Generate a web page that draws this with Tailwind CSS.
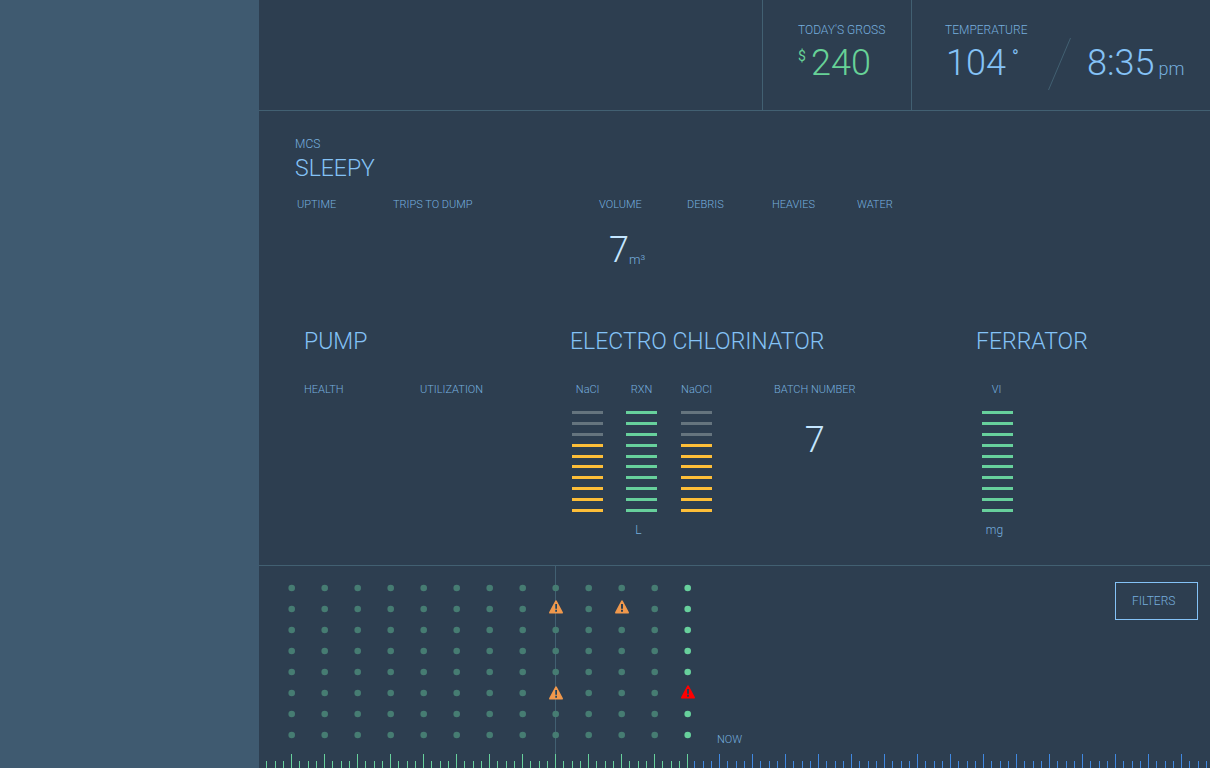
<!DOCTYPE html>
<html lang="en">
<head>
<meta charset="utf-8">
<title>MCS Sleepy</title>
<script src="https://cdn.jsdelivr.net/npm/@tailwindcss/browser@4"></script>
</head>
<body class="flex min-h-screen bg-[#2d3e50] font-['Roboto',sans-serif] font-light text-[#84c2f6]">
  <aside class="w-[259px] shrink-0 bg-[#3f5a70]" aria-label="Sidebar"></aside>
  <main class="flex min-w-0 flex-1 flex-col">
    <header class="flex h-[111px] justify-end border-b border-[#426072]">
      <section class="w-[149px] border-l border-[#426072] pt-[22px] pl-[35px]">
        <h2 class="text-xs leading-4 whitespace-nowrap text-[#76aedf]">TODAY'S GROSS</h2>
        <p class="mt-[5px] flex text-4xl leading-10 text-[#67d297]"><span class="mt-[3px] w-[13px] text-sm leading-5 font-normal">$</span>240</p>
      </section>
      <section class="flex w-[299px] border-l border-[#426072] pt-[22px] pl-[33px]">
        <div class="w-[103px]">
          <h2 class="text-xs leading-4 text-[#76aedf]">TEMPERATURE</h2>
          <p class="mt-[5px] flex pl-px text-4xl leading-10">104<span class="mt-1 ml-1.5 text-lg leading-5 font-normal">°</span></p>
        </div>
        <svg class="mt-4 h-[52px] w-[23px]" viewBox="0 0 23 52" aria-hidden="true"><path d="M22.5 0 .5 52" stroke="#426072" fill="none"/></svg>
        <p class="mt-[21px] ml-4 text-4xl leading-10 whitespace-nowrap">8:35<span class="ml-1 text-lg text-[#76aedf]">pm</span></p>
      </section>
    </header>

    <section class="flex-1 pt-[25px] pl-9">
      <p class="text-xs leading-4 text-[#76aedf]">MCS</p>
      <h1 class="mt-[3px] text-[23px] leading-7">SLEEPY</h1>
      <dl class="mt-[14px] grid grid-cols-[96px_206px_88px_85px_85px_1fr] pl-0.5 text-[11px] leading-4 text-[#76aedf]">
        <div><dt>UPTIME</dt></div>
        <div><dt>TRIPS TO DUMP</dt></div>
        <div><dt>VOLUME</dt><dd class="mt-[17px] flex pl-[10px] text-[13px] leading-10"><span class="text-4xl leading-10 text-[#c4e6ff]">7</span><span class="pt-[10px]">m³</span></dd></div>
        <div><dt>DEBRIS</dt></div>
        <div><dt>HEAVIES</dt></div>
        <div><dt>WATER</dt></div>
      </dl>

      <div class="mt-12 grid grid-cols-[266px_406px_1fr] pl-[9px] text-[11px] leading-4 text-[#76aedf]">
        <section>
          <h2 class="text-[23px] leading-7 text-[#84c2f6]">PUMP</h2>
          <div class="mt-[26px] grid grid-cols-[116px_1fr]"><h3>HEALTH</h3><h3>UTILIZATION</h3></div>
        </section>
        <section>
          <h2 class="text-[23px] leading-7 text-[#84c2f6]">ELECTRO CHLORINATOR</h2>
          <div class="mt-[26px] flex">
            <div class="flex w-[35px] flex-col items-center"><h3>NaCl</h3><div data-level="7" class="mt-[13px] flex h-[101px] w-[31px] flex-col justify-between text-[#fdbe38]"></div></div>
            <div class="ml-[19px] flex w-[35px] flex-col items-center"><h3>RXN</h3><div data-level="10" class="mt-[13px] flex h-[101px] w-[31px] flex-col justify-between text-[#67d09c]"></div><p class="mt-[10px] mr-1.5 text-xs leading-4">L</p></div>
            <div class="ml-5 flex w-[35px] flex-col items-center"><h3>NaOCl</h3><div data-level="7" class="mt-[13px] flex h-[101px] w-[31px] flex-col justify-between text-[#fdbe38]"></div></div>
            <div class="ml-[60px] text-center"><h3>BATCH NUMBER</h3><p class="mt-[22px] text-4xl leading-10 text-[#c4e6ff]">7</p></div>
          </div>
        </section>
        <section>
          <h2 class="text-[23px] leading-7 text-[#84c2f6]">FERRATOR</h2>
          <div class="mt-[26px] ml-1 flex w-[35px] flex-col items-center"><h3 class="mr-0.5">VI</h3><div data-level="10" class="mt-[13px] flex h-[101px] w-[31px] flex-col justify-between text-[#67d09c]"></div><p class="mt-[10px] mr-1.5 text-xs leading-4">mg</p></div>
        </section>
      </div>
    </section>

    <section class="relative h-[203px] border-t border-[#426072]" aria-label="Timeline">
      <svg class="block h-[202px] w-full" aria-hidden="true">
        <defs>
          <pattern id="ticks-past" x="7" y="188" width="33" height="14" patternUnits="userSpaceOnUse">
            <path d="M0 7h1v7H0zM9 7h1v7H9zM17 7h1v7h-1zM25 0h1v14h-1z" fill="#67d09c"/>
          </pattern>
          <pattern id="ticks-next" x="435" y="188" width="33" height="14" patternUnits="userSpaceOnUse">
            <path d="M0 7h1v7H0zM9 7h1v7H9zM17 7h1v7h-1zM25 0h1v14h-1z" fill="#4088e0"/>
          </pattern>
          <path id="warning" fill-rule="evenodd" d="M7 0.3Q7.5 .3 7.9 1L13.9 12.3Q14.3 13.5 13.2 13.5H.8Q-.3 13.5.1 12.3L6.1 1Q6.5.3 7 .3ZM6 4v4.7h2V4ZM6 9.8v2h2v-2Z"/>
        </defs>
        <rect x="296" width="1" height="202" fill="#426072"/>
        <g id="dots" fill="#67d09c"></g>
        <g fill="#f0984c">
          <use href="#warning" x="290" y="34"/><use href="#warning" x="356" y="34"/><use href="#warning" x="290" y="120"/>
        </g>
        <use href="#warning" x="422" y="119" fill="#ff0000"/>
        <rect x="7" y="188" width="428" height="14" fill="url(#ticks-past)"/>
        <rect x="435" y="188" width="100%" height="14" fill="url(#ticks-next)"/>
      </svg>
      <span class="absolute bottom-5 left-[458px] text-[11px] leading-4 text-[#76aedf]">NOW</span>
      <button type="button" class="absolute top-4 right-3 h-[38px] w-[83px] border border-[#84c2f6] pl-4 text-left text-xs text-[#76aedf]">FILTERS</button>
    </section>
  </main>
  <script>
    document.querySelectorAll('[data-level]').forEach(function (gauge) {
      for (var i = 10; i > 0; i--) {
        var bar = document.createElement('span');
        bar.className = i > Number(gauge.dataset.level) ? 'h-[3px] bg-[#65747e]' : 'h-[3px] bg-current';
        gauge.appendChild(bar);
      }
    });
    var dots = document.getElementById('dots');
    var alerts = ['8,1', '10,1', '8,5', '12,5'];
    for (var col = 0; col < 13; col++) {
      for (var row = 0; row < 8; row++) {
        if (alerts.includes(col + ',' + row)) continue;
        var dot = document.createElementNS('http://www.w3.org/2000/svg', 'circle');
        dot.setAttribute('cx', 32.7 + col * 33);
        dot.setAttribute('cy', 22 + row * 21);
        dot.setAttribute('r', 3.3);
        if (col < 12) dot.setAttribute('fill', '#467c72');
        dots.appendChild(dot);
      }
    }
  </script>
</body>
</html>
